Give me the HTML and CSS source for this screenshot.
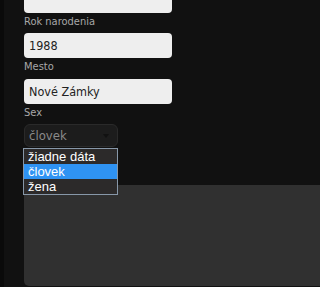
FILE: index.html
```html
<!DOCTYPE html>
<html>
<head>
<meta charset="utf-8">
<link rel="stylesheet" href="styles.css">
</head>
<body>
<div class="page">
  <div class="strip"></div>
  <div class="main">
    <form class="form">
      <div class="input"></div>
      <label class="label">Rok narodenia</label>
      <div class="input">1988</div>
      <label class="label">Mesto</label>
      <div class="input">Nové Zámky</div>
      <label class="label">Sex</label>
      <div class="select-wrap">
        <div class="select">človek<span class="arrow"></span></div>
        <ul class="dropdown">
          <li>žiadne dáta</li>
          <li class="active">človek</li>
          <li>žena</li>
        </ul>
      </div>
    </form>
    <div class="panel"></div>
  </div>
</div>
</body>
</html>
```

FILE: styles.css
```css
html, body {
  margin: 0;
  padding: 0;
  background: #111111;
  height: 287px;
  overflow: hidden;
}
.page {
  display: flex;
  height: 287px;
}
.strip {
  width: 4px;
  background: #0a0a0a;
  flex: none;
}
.main {
  flex: 1;
  padding-left: 20px;
  display: flex;
  flex-direction: column;
}
.form {
  margin-top: -12px;
  width: 148px;
  display: flex;
  flex-direction: column;
}
.input {
  box-sizing: border-box;
  height: 25px;
  background: #eeeeee;
  border-radius: 4px;
  font-family: "DejaVu Sans Condensed", "DejaVu Sans", sans-serif;
  font-size: 12.5px;
  color: #222;
  line-height: 25px;
  padding-left: 5px;
}
.label {
  display: block;
  height: 20px;
  box-sizing: border-box;
  padding-top: 2px;
  font-family: "DejaVu Sans Condensed", "DejaVu Sans", sans-serif;
  font-size: 11px;
  color: #a8a8a8;
}
.label:nth-of-type(2) { height: 21px; }
.select-wrap {
  position: relative;
  width: 94px;
}
.select {
  box-sizing: border-box;
  height: 23px;
  border: 1px solid #2a2a2a;
  background: #1c1c1c;
  border-radius: 6px;
  color: #8a8a8a;
  font-family: "DejaVu Sans Condensed", "DejaVu Sans", sans-serif;
  font-size: 13px;
  line-height: 21px;
  padding-left: 4px;
  position: relative;
}
.arrow {
  position: absolute;
  right: 8px;
  top: 9px;
  width: 0;
  height: 0;
  border-left: 3px solid transparent;
  border-right: 3px solid transparent;
  border-top: 4px solid #111;
}
.dropdown {
  position: absolute;
  left: -1px;
  top: 24px;
  width: 95px;
  box-sizing: border-box;
  margin: 0;
  padding: 0;
  list-style: none;
  border: 1px solid #8797a8;
  background: #2c2a2a;
  z-index: 2;
}
.dropdown li {
  height: 15px;
  line-height: 15px;
  padding-left: 4px;
  font-family: "Liberation Sans", Arial, sans-serif;
  font-size: 13px;
  color: #ffffff;
}
.dropdown li.active {
  background: #2f93f3;
}
.panel {
  margin-top: 38px;
  height: 101px;
  background: #303030;
  border-bottom-left-radius: 5px;
}
```
